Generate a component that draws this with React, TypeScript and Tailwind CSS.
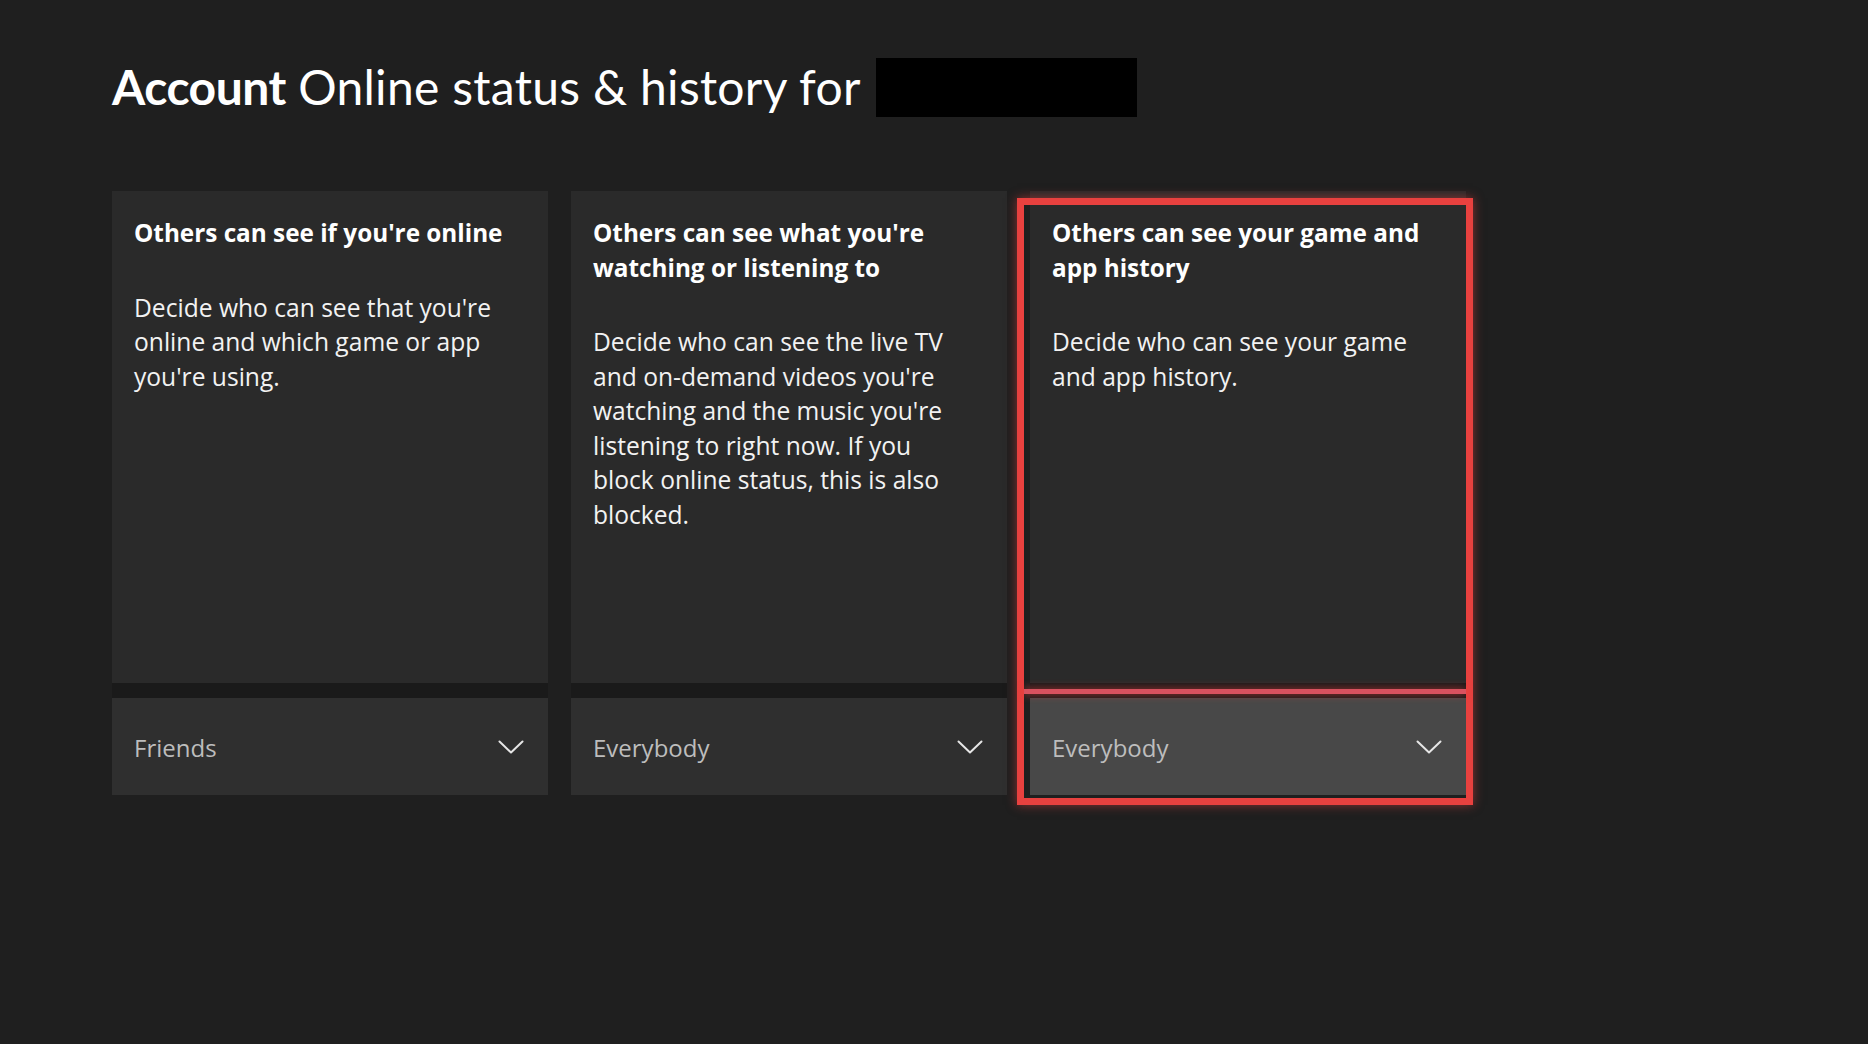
import React from "react";

type Col = {
  title: string;
  body: string;
  value: string;
  focused?: boolean;
};

const cols: Col[] = [
  {
    title: "Others can see if you're online",
    body: "Decide who can see that you're online and which game or app you're using.",
    value: "Friends",
  },
  {
    title: "Others can see what you're watching or listening to",
    body: "Decide who can see the live TV and on-demand videos you're watching and the music you're listening to right now. If you block online status, this is also blocked.",
    value: "Everybody",
  },
  {
    title: "Others can see your game and app history",
    body: "Decide who can see your game and app history.",
    value: "Everybody",
    focused: true,
  },
];

function Chevron() {
  return (
    <svg width="26" height="14" viewBox="0 0 26 14" fill="none">
      <path d="M1.5 1.5 L13 12.5 L24.5 1.5" stroke="#e6e6e6" strokeWidth="2" strokeLinecap="round" strokeLinejoin="round" />
    </svg>
  );
}

export default function App() {
  return (
    <div
      className="min-h-screen w-full bg-[#1f1f1f] pl-[112px] pt-[58px] text-white"
      style={{ fontFamily: '"Open Sans", "Noto Sans", sans-serif' }}
    >
      <div className="flex h-[59px] items-center gap-[15px]">
        <h1
          className="-mt-[3px] text-[48px] leading-[59px] text-white"
          style={{ fontFamily: 'Lato, "Open Sans", sans-serif' }}
        >
          <span className="font-bold tracking-[-0.5px]">Account</span>{" "}
          <span className="tracking-[0.3px]">Online status &amp; history for</span>
        </h1>
        <div className="h-[59px] w-[261px] bg-black" />
      </div>

      <div className="mt-[74px] flex gap-[23px]">
        {cols.map((c, i) => (
          <div key={i} className="relative flex w-[436px] flex-col">
            <div className="h-[492px] bg-[#2a2a2a] pl-[22px] pr-[18px] pt-[25px]">
              <h2 className="text-[24.3px] font-bold leading-[34.5px] text-white">{c.title}</h2>
              <p className="mt-[40px] max-w-[370px] text-[24.6px] leading-[34.5px] text-[#f2f2f2]">{c.body}</p>
            </div>
            <div className="h-[15px] bg-[#1a1a1a]" />
            <div
              className={
                "flex h-[97px] items-center justify-between pl-[22px] pr-[24px] " +
                (c.focused ? "bg-[#484848]" : "bg-[#2f2f2f]")
              }
            >
              <span className="mt-[3px] text-[24px] text-[#bdbdbd]">{c.value}</span>
              <Chevron />
            </div>
            {c.focused && (
              <>
                <div className="pointer-events-none absolute -left-[13px] -right-[7px] top-[7px] -bottom-[10px] border-[7px] border-[#e8413f] shadow-[0_0_10px_rgba(232,65,63,0.55)]" />
                <div className="pointer-events-none absolute -left-[6px] right-0 top-[498px] h-[5px] bg-[#d9525f] shadow-[0_0_8px_rgba(232,65,63,0.8)]" />
              </>
            )}
          </div>
        ))}
      </div>
    </div>
  );
}
